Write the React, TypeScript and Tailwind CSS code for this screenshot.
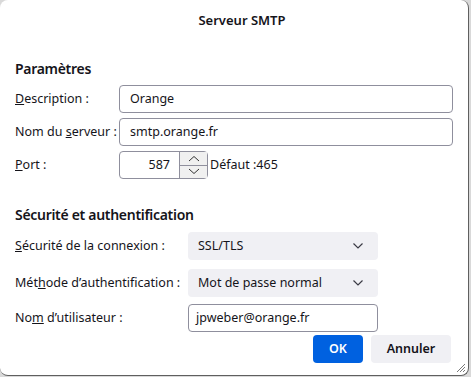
import React from "react";

const font = { fontFamily: '"Noto Sans", "Open Sans", sans-serif' };

function Chevron() {
  return (
    <svg width="12" height="8" viewBox="0 0 12 8" className="text-[#3b3b45]">
      <path d="M1.5 1.5 L6 6 L10.5 1.5" fill="none" stroke="currentColor" strokeWidth="1.2" />
    </svg>
  );
}

export default function App() {
  return (
    <div className="w-[471px] h-[377px] bg-[#d9d9d9] overflow-hidden text-[#15141a]" style={font}>
      <div className="relative w-[469px] h-[376px] bg-white rounded-[8px] border-r border-b border-[#5f5f5f] text-[12.5px]">
        <div className="pt-[10px] text-center font-semibold text-[13px] leading-[20px] pl-[16px]">Serveur SMTP</div>

        <div className="px-[15px]">
          <div className="mt-[28px] text-[14px] tracking-[-0.3px] font-semibold leading-[22px]">Paramètres</div>

          <div className="mt-[5px] flex flex-col gap-[5px]">
            <div className="flex items-center h-[28px]">
              <div className="w-[104px]"><span className="underline">D</span>escription :</div>
              <div className="flex-1 h-[28px] border border-[#8f8f9d] rounded-[4px] px-[10px] flex items-center">Orange</div>
            </div>
            <div className="flex items-center h-[28px]">
              <div className="w-[104px] whitespace-nowrap">Nom du <span className="underline">s</span>erveur :</div>
              <div className="flex-1 h-[28px] border border-[#8f8f9d] rounded-[4px] px-[10px] flex items-center">smtp.orange.fr</div>
            </div>
            <div className="flex items-center h-[28px]">
              <div className="w-[104px]"><span className="underline">P</span>ort :</div>
              <div className="w-[89px] h-[28px] border border-[#8f8f9d] rounded-[4px] flex items-center">
                <div className="flex-1 text-right pr-[9px]">587</div>
                <div className="w-[28px] h-[26px] flex flex-col border-l border-[#8f8f9d]">
                  <div className="flex-1 flex items-center justify-center bg-[#f0f0f0] border-b border-[#8f8f9d]">
                    <svg width="12" height="7" viewBox="0 0 12 7"><path d="M1 6 L6 1.5 L11 6" fill="none" stroke="#333" strokeWidth="1" /></svg>
                  </div>
                  <div className="flex-1 flex items-center justify-center bg-[#f0f0f0]">
                    <svg width="12" height="7" viewBox="0 0 12 7"><path d="M1 1 L6 5.5 L11 1" fill="none" stroke="#333" strokeWidth="1" /></svg>
                  </div>
                </div>
              </div>
              <div className="ml-[2px]">Défaut :465</div>
            </div>
          </div>

          <div className="mt-[25px] text-[14px] tracking-[-0.3px] font-semibold leading-[22px]">Sécurité et authentification</div>

          <div className="mt-[6px] flex items-center h-[28px]">
            <div className="w-[173px]"><span className="underline">S</span>écurité de la connexion :</div>
            <div className="w-[190px] h-[28px] bg-[#f0f0f4] rounded-[4px] pl-[10px] pr-[14px] flex items-center justify-between">
              <span>SSL/TLS</span>
              <Chevron />
            </div>
          </div>
          <div className="mt-[9px] flex items-center h-[28px]">
            <div className="w-[173px] whitespace-nowrap">Mét<span className="underline">h</span>ode d’authentification :</div>
            <div className="w-[190px] h-[28px] bg-[#f0f0f4] rounded-[4px] pl-[10px] pr-[14px] flex items-center justify-between">
              <span>Mot de passe normal</span>
              <Chevron />
            </div>
          </div>
          <div className="mt-[7px] flex items-center h-[28px]">
            <div className="w-[173px]">No<span className="underline">m</span> d’utilisateur :</div>
            <div className="w-[190px] h-[28px] border border-[#8f8f9d] rounded-[4px] px-[7px] flex items-center">jpweber@orange.fr</div>
          </div>

          <div className="mt-[3px] flex justify-end gap-[8px] pr-[2px]">
            <div className="w-[50px] h-[28px] bg-[#0061e0] text-white font-semibold rounded-[4px] flex items-center justify-center">OK</div>
            <div className="w-[80px] h-[28px] bg-[#f0f0f4] font-semibold rounded-[4px] flex items-center justify-center">Annuler</div>
          </div>
        </div>

        <svg className="absolute right-[2px] bottom-[2px]" width="12" height="12" viewBox="0 0 12 12">
          <path d="M11 3 L3 11 M11 6 L6 11 M11 9 L9 11" stroke="#7a7a7a" strokeWidth="1" />
        </svg>
      </div>
    </div>
  );
}
